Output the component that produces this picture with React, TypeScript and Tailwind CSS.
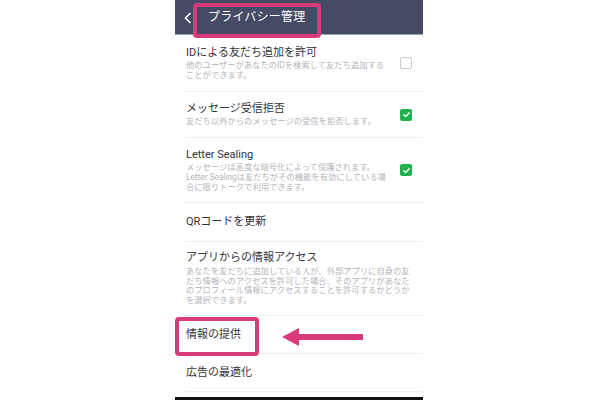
import React from "react";

type Row = {
  title: string;
  desc?: string[];
  check?: "on" | "off";
  h: string;
};

const rows: Row[] = [
  {
    title: "IDによる友だち追加を許可",
    desc: ["他のユーザーがあなたのIDを検索して友だち追加する", "ことができます。"],
    check: "off",
    h: "h-[57px]",
  },
  {
    title: "メッセージ受信拒否",
    desc: ["友だち以外からのメッセージの受信を拒否します。"],
    check: "on",
    h: "h-[46px]",
  },
  {
    title: "Letter Sealing",
    desc: [
      "メッセージは高度な暗号化によって保護されます。",
      "Letter Sealingは友だちがその機能を有効にしている場",
      "合に限りトークで利用できます。",
    ],
    check: "on",
    h: "h-[65px]",
  },
  { title: "QRコードを更新", h: "h-[39px]" },
  {
    title: "アプリからの情報アクセス",
    desc: [
      "あなたを友だちに追加している人が、外部アプリに自身の友",
      "だち情報へのアクセスを許可した場合、そのアプリがあなた",
      "のプロフィール情報にアクセスすることを許可するかどうか",
      "を選択できます。",
    ],
    h: "h-[74px]",
  },
  { title: "情報の提供", h: "h-[38px]" },
  { title: "広告の最適化", h: "h-[38px]" },
];

function CheckBox({ on }: { on: boolean }) {
  if (!on) {
    return (
      <div className="w-[12px] h-[12px] rounded-[2px] border-[1.5px] border-[#c9c9cf] bg-white" />
    );
  }
  return (
    <div className="w-[12px] h-[12px] rounded-[2px] bg-[#22b14c] flex items-center justify-center">
      <svg width="9" height="9" viewBox="0 0 10 10">
        <polyline
          points="2,5.2 4.2,7.3 8,3"
          fill="none"
          stroke="white"
          strokeWidth="1.5"
          strokeLinecap="round"
          strokeLinejoin="round"
        />
      </svg>
    </div>
  );
}

function SettingRow({ row }: { row: Row }) {
  return (
    <div
      className={`${row.h} ml-[10px] pl-[1px] pr-[11px] border-b border-[#eeeef0] flex items-center justify-between`}
    >
      <div className="flex flex-col">
        <div className="text-[11px] leading-[14px] text-[#333338] whitespace-nowrap">
          {row.title}
        </div>
        {row.desc && (
          <div className="mt-[1.5px] text-[8.3px] leading-[9.7px] text-[#b5b5bc] whitespace-nowrap">
            {row.desc.map((line) => (
              <div key={line}>{line}</div>
            ))}
          </div>
        )}
      </div>
      {row.check && <CheckBox on={row.check === "on"} />}
    </div>
  );
}

export default function App() {
  return (
    <div
      className="relative w-[600px] h-[400px] bg-white overflow-hidden pl-[175px]"
      style={{ fontFamily: "Roboto, 'Noto Sans CJK JP', sans-serif" }}
    >
      <div className="w-[248px] h-[400px] flex flex-col bg-white">
        <header className="h-[35px] shrink-0 bg-[#454b64] border-b border-[#9fa3b0] flex items-center pl-[9px] gap-[16px]">
          <svg width="8" height="12" viewBox="0 0 8 12" className="mt-[1px]">
            <polyline
              points="6.5,1 1.5,6 6.5,11"
              fill="none"
              stroke="white"
              strokeWidth="1.6"
            />
          </svg>
          <span className="text-[12px] text-white tracking-[0.2px]">プライバシー管理</span>
        </header>
        {rows.map((row) => (
          <SettingRow key={row.title} row={row} />
        ))}
        <div className="flex-1" />
        <div className="h-[3px] bg-[#111111]" />
      </div>

      {/* annotations */}
      <div className="absolute left-[193px] top-[3px] w-[128px] h-[35px] border-4 border-[#d93a7c] rounded-[4px]" />
      <div className="absolute left-[175px] top-[317px] w-[84px] h-[39px] border-4 border-[#d93a7c] rounded-[4px]" />
      <svg className="absolute left-[280px] top-[326px]" width="86" height="22" viewBox="0 0 86 22">
        <polygon points="2,11 19,2 19,20" fill="#d93a7c" />
        <rect x="17" y="8" width="66" height="6" fill="#d93a7c" />
      </svg>
    </div>
  );
}
